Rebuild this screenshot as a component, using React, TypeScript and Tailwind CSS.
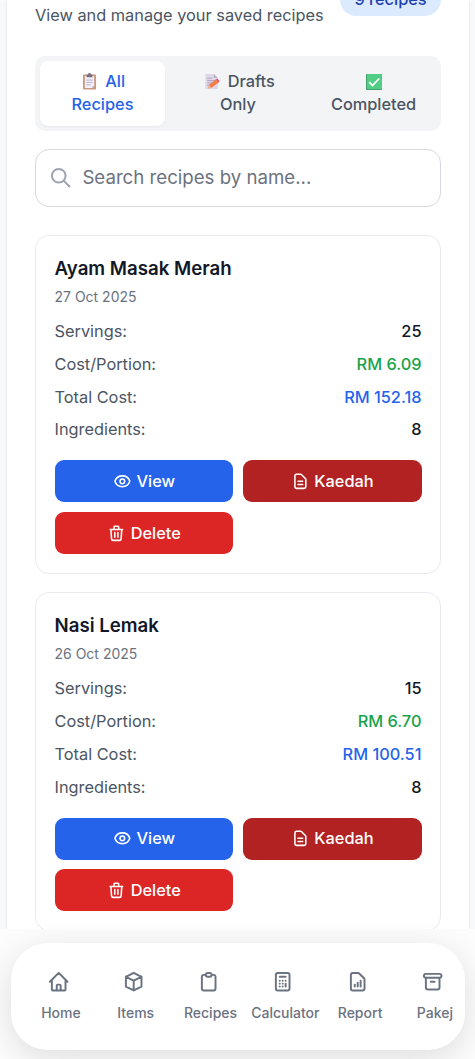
import React, { useState } from "react";
import { clsx } from "clsx";
import {
  HiOutlineArchive,
  HiOutlineCalculator,
  HiOutlineClipboard,
  HiOutlineCube,
  HiOutlineDocumentReport,
  HiOutlineDocumentText,
  HiOutlineEye,
  HiOutlineHome,
  HiOutlineSearch,
  HiOutlineTrash,
} from "react-icons/hi";

const ClipboardEmoji = () => (
  <svg viewBox="0 0 16 18" className="h-[17px] w-[15px]">
    <rect x="1" y="1.5" width="14" height="16" rx="1" fill="#c99a80" />
    <path d="M3 3.5h10v10.5l-2 2H3z" fill="#f3eef8" />
    <path d="M13 14h-2v2z" fill="#b9b0c6" />
    <path d="M5 1.5h1.5a1.5 1.5 0 0 1 3 0H11v3H5z" fill="#756f80" />
    <path d="M4.5 7.5h7M4.5 10h7M4.5 12.5h5" stroke="#b8b2cc" strokeWidth="1" />
  </svg>
);

const MemoEmoji = () => (
  <svg viewBox="0 0 16 18" className="h-[17px] w-[16px]">
    <path d="M1 1h9l4 4v12H1z" fill="#ddd6e6" />
    <path d="M10 1v4h4z" fill="#b5adc4" />
    <path d="M3 5.5h5M3 8h8M3 10.5h6M3 13h3" stroke="#aaa3bd" strokeWidth="1" />
    <path d="M4 16.5l1-4 7-5.5 3 3-7.5 5.5z" fill="#f47b45" />
    <path d="M12 7l1.5-1.2 2.5 2.8-1 1.4z" fill="#e8556a" />
    <path d="M4 16.5l1-3.5 2.5 2.5z" fill="#f7b48b" />
  </svg>
);

const CheckEmoji = () => (
  <svg viewBox="0 0 16 16" className="size-4">
    <rect width="16" height="16" rx="1" fill="#43a071" />
    <rect x="1" width="15" height="15" rx="0.8" fill="#52cd86" />
    <path d="M3.2 8.2l3.3 3.3 6.7-7" fill="none" stroke="#fff" strokeWidth="1.8" />
  </svg>
);

const tabs = [
  { first: "All", second: "Recipes", icon: ClipboardEmoji },
  { first: "Drafts", second: "Only", icon: MemoEmoji },
  { first: "", second: "Completed", icon: CheckEmoji },
];

const recipes = [
  { name: "Ayam Masak Merah", date: "27 Oct 2025", servings: 25, portion: "6.09", total: "152.18", ingredients: 8 },
  { name: "Nasi Lemak", date: "26 Oct 2025", servings: 15, portion: "6.70", total: "100.51", ingredients: 8 },
];

const navItems = [
  { label: "Home", icon: HiOutlineHome },
  { label: "Items", icon: HiOutlineCube },
  { label: "Recipes", icon: HiOutlineClipboard },
  { label: "Calculator", icon: HiOutlineCalculator },
  { label: "Report", icon: HiOutlineDocumentReport },
  { label: "Pakej", icon: HiOutlineArchive },
];

const Row = ({ label, value, color }: { label: string; value: string | number; color: string }) => (
  <div className="flex items-center justify-between">
    <span className="text-[#4b5563]">{label}</span>
    <span className={clsx("font-medium", color)}>{value}</span>
  </div>
);

const buttonClass =
  "flex h-[42px] items-center justify-center gap-[5px] rounded-[9px] text-[16.33px] font-medium text-white";

const RecipeCard = ({ recipe }: { recipe: (typeof recipes)[number] }) => (
  <article className="h-[338.5px] shrink-0 rounded-[14px] border border-[#e8eaed] bg-white px-[18.5px] pt-[18.7px]">
    <h3 className="text-[18.67px] leading-[28px] font-semibold text-[#111827]">{recipe.name}</h3>
    <p className="mt-[4px] text-[14px] leading-[19px] text-[#6b7280]">{recipe.date}</p>
    <div className="mt-[14.3px] flex flex-col gap-[9.4px] text-[16.33px] leading-[23.4px]">
      <Row label="Servings:" value={recipe.servings} color="text-[#111827]" />
      <Row label="Cost/Portion:" value={`RM ${recipe.portion}`} color="text-[#16a34a]" />
      <Row label="Total Cost:" value={`RM ${recipe.total}`} color="text-[#2563eb]" />
      <Row label="Ingredients:" value={recipe.ingredients} color="text-[#111827]" />
    </div>
    <div className="mt-[18.7px] grid grid-cols-2 gap-[9.4px]">
      <button type="button" className={clsx(buttonClass, "bg-[#2563eb]")}>
        <HiOutlineEye className="size-[18.7px]" /> View
      </button>
      <button type="button" className={clsx(buttonClass, "bg-[#b22222]")}>
        <HiOutlineDocumentText className="size-[18.7px]" /> Kaedah
      </button>
      <button type="button" className={clsx(buttonClass, "bg-[#dc2626]")}>
        <HiOutlineTrash className="size-[18.7px]" /> Delete
      </button>
    </div>
  </article>
);

export default function App() {
  const [activeTab, setActiveTab] = useState(0);

  return (
    <div className="h-[1059px] w-full overflow-hidden bg-[#fcfcfc] font-[Inter,sans-serif]">
      <div className="h-[929px] overflow-hidden bg-[#f8f9fb] pr-[6px] pl-[7px]">
        <main className="flex h-[960px] flex-col bg-white pr-[28px] pl-[28px] shadow-sm">
          <header className="flex h-[56px] shrink-0 items-start justify-between">
            <p className="mt-[2px] text-[16.33px] leading-[26px] text-[#4b5563]">
              View and manage your saved recipes
            </p>
            <span className="-mt-[17px] flex h-[33px] w-[101px] items-center justify-center rounded-full bg-[#dbeafe] text-[16.33px] font-medium text-[#1e40af]">
              9 recipes
            </span>
          </header>

          <div className="grid h-[74.5px] shrink-0 grid-cols-3 gap-[10px] rounded-[10px] bg-[#f3f4f6] p-[4.7px]">
            {tabs.map(({ first, second, icon: Icon }, i) => (
              <button
                key={second}
                type="button"
                onClick={() => setActiveTab(i)}
                className={clsx(
                  "flex flex-col items-center justify-center rounded-[8px] text-[16.33px] leading-[23.4px] font-medium",
                  activeTab === i
                    ? "bg-white text-[#2563eb] shadow-[0_1px_2px_rgba(0,0,0,0.05)]"
                    : "text-[#4b5563]"
                )}
              >
                <span className={clsx("flex h-[23.4px] items-center", first && "gap-[8px] pl-[2.5px]")}>
                  <Icon />
                  {first}
                </span>
                <span>{second}</span>
              </button>
            ))}
          </div>

          <label className="mt-[18.5px] flex h-[58px] shrink-0 items-center gap-[10.5px] rounded-[14px] border border-[#d6d9de] px-[12.5px]">
            <HiOutlineSearch className="size-[23.4px] text-[#9ca3af]" />
            <input
              type="text"
              placeholder="Search recipes by name..."
              className="min-w-0 flex-1 text-[18.67px] outline-none placeholder:text-[#6b7280]"
            />
          </label>

          <section className="mt-[28px] flex flex-col gap-[18.7px]">
            {recipes.map((recipe) => (
              <RecipeCard key={recipe.name} recipe={recipe} />
            ))}
          </section>
        </main>
      </div>

      <nav className="relative mx-[11px] mr-[10px] mt-[14px] flex h-[107px] overflow-hidden rounded-[37px] bg-white pl-[12.5px] shadow-[0_8px_32px_rgba(0,0,0,0.12)]">
        {navItems.map(({ label, icon: Icon }) => (
          <a key={label} href="#" className="flex w-[74.8px] shrink-0 flex-col items-center pt-[27px] text-[#6b7280]">
            <Icon className="mr-[4.5px] size-[23.4px]" />
            <span className="mt-[9px] text-[14px] leading-[21px] font-medium">{label}</span>
          </a>
        ))}
      </nav>
    </div>
  );
}
